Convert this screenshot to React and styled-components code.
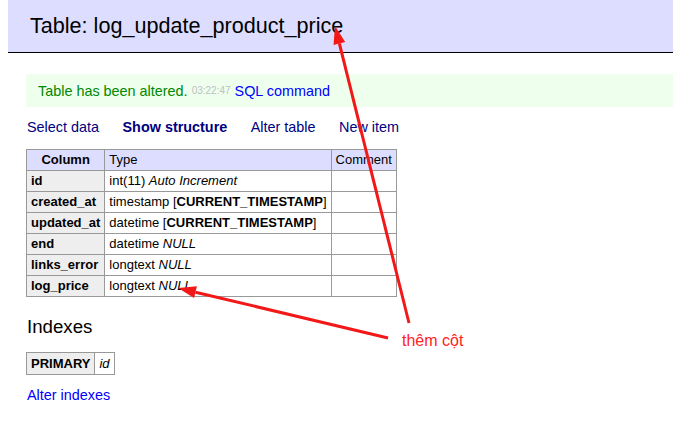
import React from 'react';
import styled, { createGlobalStyle } from 'styled-components';

const GlobalStyle = createGlobalStyle`
  html, body {
    margin: 0;
    padding: 0;
    background: #fff;
    font-family: "Liberation Sans", Arial, sans-serif;
    color: #000;
  }
`

const Page = styled.div`
  position: relative;
  width: 673px;
  height: 423px;
  overflow: hidden;
  padding-left: 8px;
  box-sizing: border-box;
  font-size: 14.4px;
`

const Header = styled.h2`
  margin: 0;
  height: 52px;
  padding: 0 22px;
  display: flex;
  align-items: center;
  background: #ddf;
  border-bottom: 1px solid #000;
  font-size: 21.6px;
  font-weight: 400;
  color: #000;
`

const Content = styled.div`
  padding: 21px 0 0 18px;
`

const Message = styled.div`
  height: 33px;
  display: flex;
  align-items: center;
  padding: 0 12px;
  background: #efe;
  color: #080;
  white-space: nowrap;
`

const Time = styled.span`
  color: #c0c0c0;
  font-size: 10px;
  margin: 0 4px 0 4px;
`

const Link = styled.a`
  color: ${(p) => (p.visited ? '#000080' : '#0000ff')};
  font-weight: ${(p) => (p.bold ? 700 : 400)};
  text-decoration: none;
`

const Nav = styled.nav`
  display: flex;
  gap: 23.5px;
  margin: 12px 0 0 1px;
  height: 16px;
  align-items: center;
`

const Table = styled.table`
  border-collapse: collapse;
  font-size: 13px;
  margin-top: ${(p) => p.top || 0}px;
`

const HeadCell = styled.th`
  background: #ddf;
  border: 1px solid #999;
  padding: 2px 4px 3px;
  font-weight: ${(p) => (p.plain ? 400 : 700)};
  text-align: ${(p) => (p.plain ? 'left' : 'center')};
  line-height: 15px;
`

const RowHead = styled.th`
  background: #eee;
  border: 1px solid #999;
  padding: ${(p) => (p.tall ? '3px 4px 3px' : '2px 4px 3px')};
  text-align: left;
  line-height: 15px;
`

const Cell = styled.td`
  border: 1px solid #999;
  padding: 2px 4px 3px;
  line-height: 15px;
  white-space: nowrap;
`

const Heading = styled.h3`
  margin: 19px 0 0 1px;
  font-size: 18.7px;
  font-weight: 400;
  line-height: 22px;
`

const Footer = styled.div`
  margin: 12px 0 0 1px;
  height: 16px;
  display: flex;
  align-items: center;
`

const Overlay = styled.svg`
  position: absolute;
  left: 0;
  top: 0;
  pointer-events: none;
`

const Note = styled.span`
  position: absolute;
  left: 402px;
  top: 332px;
  color: #f22;
  font-size: 16px;
`

const columns = [
  { name: 'id', type: 'int(11)', extra: <i>Auto Increment</i> },
  { name: 'created_at', type: 'timestamp', extra: <>[<b>CURRENT_TIMESTAMP</b>]</> },
  { name: 'updated_at', type: 'datetime', extra: <>[<b>CURRENT_TIMESTAMP</b>]</> },
  { name: 'end', type: 'datetime', extra: <i>NULL</i> },
  { name: 'links_error', type: 'longtext', extra: <i>NULL</i> },
  { name: 'log_price', type: 'longtext', extra: <i>NULL</i> },
]

const Arrow = ({ tail, tip }) => {
  const dx = tip[0] - tail[0]
  const dy = tip[1] - tail[1]
  const len = Math.hypot(dx, dy)
  const ux = dx / len
  const uy = dy / len
  const bx = tip[0] - 18 * ux
  const by = tip[1] - 18 * uy
  const nx = -uy * 6
  const ny = ux * 6
  return (
    <g>
      <line x1={tail[0]} y1={tail[1]} x2={bx} y2={by} stroke="#f21818" strokeWidth="3" />
      <polygon
        points={`${tip[0]},${tip[1]} ${bx + nx},${by + ny} ${bx - nx},${by - ny}`}
        fill="#f21818"
      />
    </g>
  )
}

const App = () => {
  return (
    <Page>
      <GlobalStyle />
      <Header>Table: log_update_product_price</Header>
      <Content>
        <Message>
          Table has been altered.<Time>03:22:47</Time>
          <Link href="#">SQL command</Link>
        </Message>
        <Nav>
          <Link visited href="#">Select data</Link>
          <Link visited bold href="#">Show structure</Link>
          <Link visited href="#">Alter table</Link>
          <Link visited href="#">New item</Link>
        </Nav>
        <Table top={14}>
          <thead>
            <tr>
              <HeadCell>Column</HeadCell>
              <HeadCell plain>Type</HeadCell>
              <HeadCell plain>Comment</HeadCell>
            </tr>
          </thead>
          <tbody>
            {columns.map((c) => (
              <tr key={c.name}>
                <RowHead>{c.name}</RowHead>
                <Cell>{c.type} {c.extra}</Cell>
                <Cell />
              </tr>
            ))}
          </tbody>
        </Table>
        <Heading>Indexes</Heading>
        <Table top={14}>
          <tbody>
            <tr>
              <RowHead tall>PRIMARY</RowHead>
              <Cell><i>id</i></Cell>
            </tr>
          </tbody>
        </Table>
        <Footer>
          <Link href="#">Alter indexes</Link>
        </Footer>
      </Content>
      <Overlay width="673" height="423" viewBox="0 0 673 423">
        <Arrow tail={[409, 323]} tip={[335, 26]} />
        <Arrow tail={[388, 338]} tip={[178, 288]} />
      </Overlay>
      <Note>thêm cột</Note>
    </Page>
  )
}

export default App;
